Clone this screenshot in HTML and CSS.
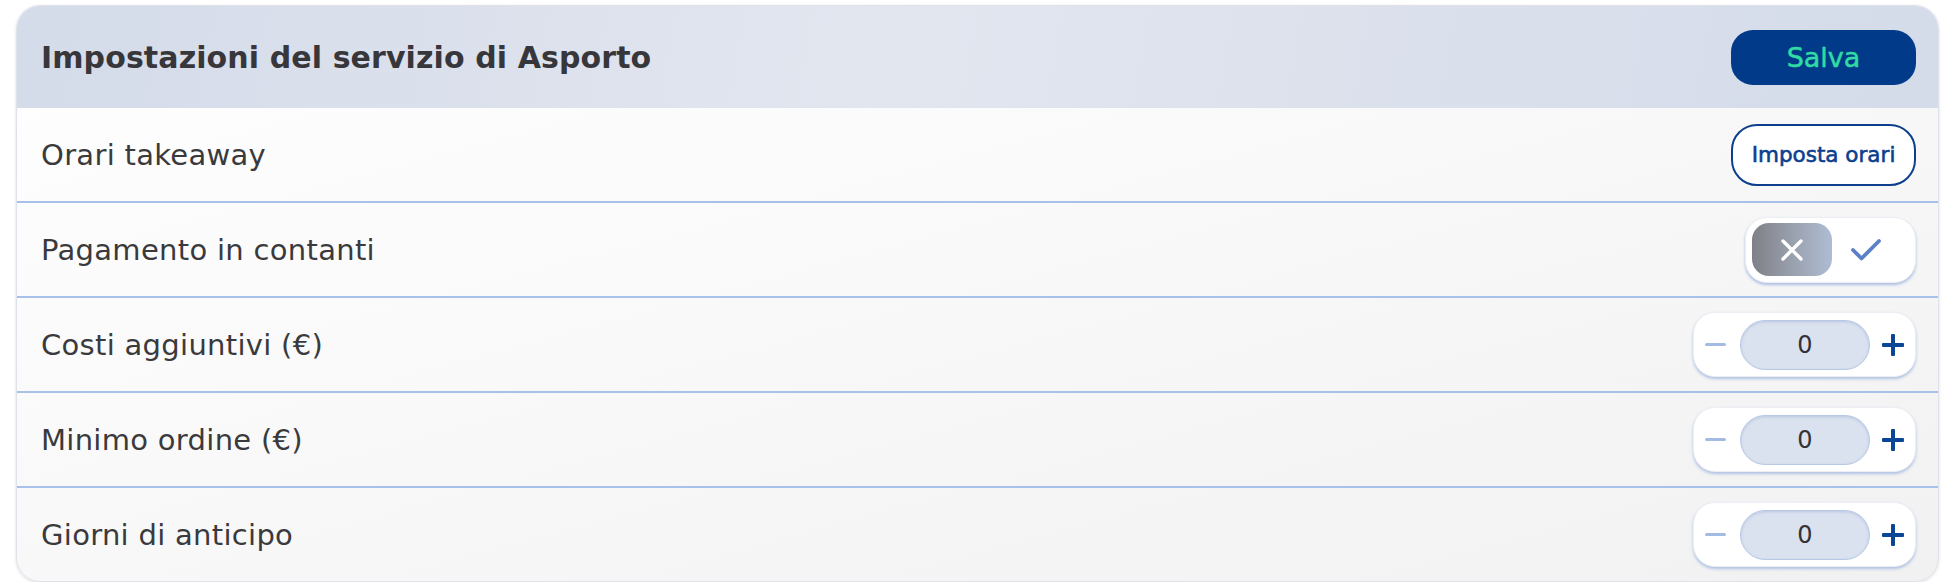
FILE: index.html
```html
<!DOCTYPE html>
<html lang="it">
<head>
<meta charset="utf-8">
<title>Impostazioni del servizio di Asporto</title>
<link rel="stylesheet" href="styles.css">
</head>
<body>
<div class="card">
  <div class="card-header">
    <h1 class="title">Impostazioni del servizio di Asporto</h1>
    <button class="btn-save">Salva</button>
  </div>
  <div class="row">
    <span class="label">Orari takeaway</span>
    <button class="btn-outline">Imposta orari</button>
  </div>
  <div class="row">
    <span class="label">Pagamento in contanti</span>
    <div class="toggle">
      <span class="toggle-off">
        <svg width="24" height="24" viewBox="0 0 24 24"><path d="M3 3 L21 21 M21 3 L3 21" stroke="#fff" stroke-width="3.4" stroke-linecap="round" fill="none"/></svg>
      </span>
      <span class="toggle-on">
        <svg width="32" height="24" viewBox="0 0 32 24"><path d="M3 12 L11.5 20.5 L29 3" stroke="#5b80c6" stroke-width="3.8" stroke-linecap="round" stroke-linejoin="round" fill="none"/></svg>
      </span>
    </div>
  </div>
  <div class="row">
    <span class="label">Costi aggiuntivi (€)</span>
    <div class="stepper">
      <span class="minus"></span>
      <span class="value">0</span>
      <span class="plus"></span>
    </div>
  </div>
  <div class="row">
    <span class="label">Minimo ordine (€)</span>
    <div class="stepper">
      <span class="minus"></span>
      <span class="value">0</span>
      <span class="plus"></span>
    </div>
  </div>
  <div class="row last">
    <span class="label">Giorni di anticipo</span>
    <div class="stepper">
      <span class="minus"></span>
      <span class="value">0</span>
      <span class="plus"></span>
    </div>
  </div>
</div>
</body>
</html>
```
FILE: styles.css
```css
* { box-sizing: border-box; }
html, body { margin: 0; background: #ffffff; }
body {
  padding: 5px 15px 0 16px;
  font-family: "DejaVu Sans", "Liberation Sans", sans-serif;
  color: #3a3a3d;
}
.card {
  border-radius: 24px;
  overflow: hidden;
  border: 1px solid #dfe2e8;
  background: linear-gradient(165deg, #ffffff 0%, #f9f9f9 45%, #f1f1f2 100%);
  box-shadow: 0 1px 3px rgba(150, 160, 180, 0.35);
}
.card-header {
  height: 102px;
  display: flex;
  align-items: center;
  justify-content: space-between;
  padding: 0 22px 0 24px;
  background: linear-gradient(100deg, #d4dbe9 0%, #e2e6ef 45%, #d4dbe9 100%);
}
.title {
  margin: 0;
  font-size: 30px;
  font-weight: 700;
  color: #37373b;
  letter-spacing: 0.1px;
}
.btn-save {
  width: 185px;
  height: 55px;
  border: none;
  border-radius: 22px;
  background: #003a88;
  color: #30dba4;
  font-family: inherit;
  font-size: 27px;
  -webkit-text-stroke: 0.5px #30dba4;
  padding: 0;
  margin-top: 1px;
}
.row {
  height: 95px;
  display: flex;
  align-items: center;
  justify-content: space-between;
  padding: 0 22px 0 24px;
  border-bottom: 2px solid #a9c0e8;
}
.row:first-of-type { height: 94px; }
.row.last { border-bottom: none; height: 93px; }
.label {
  font-size: 29px;
  letter-spacing: 0.3px;
  color: #3a3a3d;
}
.btn-outline {
  width: 185px;
  height: 62px;
  border: 2px solid #0c3f8e;
  border-radius: 26px;
  background: #ffffff;
  color: #0c3f8e;
  font-family: inherit;
  font-size: 21.5px;
  -webkit-text-stroke: 0.6px #0c3f8e;
  padding: 0;
}
.toggle {
  width: 171px;
  height: 66px;
  border-radius: 22px;
  background: #ffffff;
  border: 1px solid #eceef3;
  box-shadow: 0 2px 3px rgba(110, 145, 210, 0.55);
  display: flex;
  align-items: center;
  padding: 0 6px;
}
.toggle-off {
  width: 80px;
  height: 53px;
  border-radius: 17px;
  background: linear-gradient(90deg, #7f8087 0%, #9ea6b5 60%, #aebcd3 100%);
  display: flex;
  align-items: center;
  justify-content: center;
}
.toggle-on {
  flex: 1;
  display: flex;
  align-items: center;
  justify-content: center;
  padding-right: 10px;
}
.stepper {
  width: 223px;
  height: 65px;
  border-radius: 22px;
  background: #ffffff;
  border: 1px solid #eceef3;
  box-shadow: 0 2px 3px rgba(110, 145, 210, 0.5);
  display: flex;
  align-items: center;
  padding: 0 11px 0 11px;
}
.minus {
  width: 21px;
  height: 3px;
  border-radius: 2px;
  background: #a3bbe3;
}
.value {
  width: 131px;
  height: 50px;
  margin: 0 12px 0 14px;
  border-radius: 25px;
  background: #dbe2ef;
  border: 1.5px solid #b7c9e7;
  box-shadow: inset 0 1px 3px rgba(120, 150, 200, 0.35);
  display: flex;
  align-items: center;
  justify-content: center;
  font-size: 24px;
  color: #333336;
}
.plus {
  position: relative;
  width: 22px;
  height: 22px;
}
.plus::before, .plus::after {
  content: "";
  position: absolute;
  background: #0b4596;
  border-radius: 1px;
}
.plus::before { left: 0; top: 9px; width: 22px; height: 4px; }
.plus::after { left: 9px; top: 0; width: 4px; height: 22px; }
```
